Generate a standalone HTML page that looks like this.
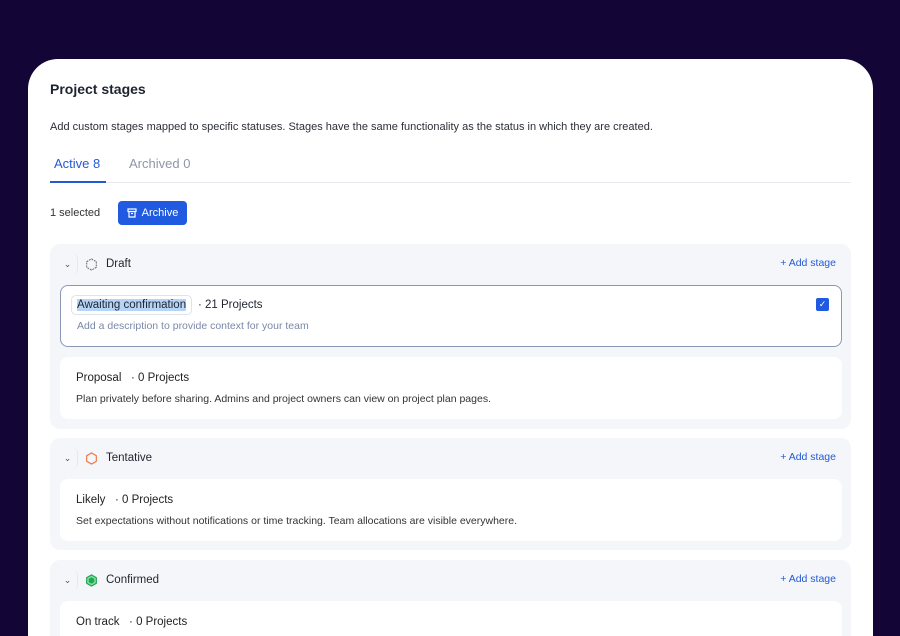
<!DOCTYPE html>
<html><head><style>
*{box-sizing:border-box;margin:0;padding:0}
html,body{width:900px;height:636px;overflow:hidden}
body{background:#130636;font-family:"Liberation Sans",sans-serif;position:relative;color:#1f2430}
.card{position:absolute;left:28px;top:59px;width:845px;height:577px;background:#fff;border-radius:30px 30px 0 0}
.abs{position:absolute}
.grp{position:absolute;left:50px;width:801px;background:#f5f6f9;border-radius:10px}
.hdr{position:absolute;left:8px;top:9px;height:22px;display:flex;align-items:center;font-size:11.5px}
.chev{width:20px;height:20px;border-radius:5px;display:flex;align-items:center;justify-content:center;color:#555;font-size:9px;border-right:1px solid #e6e8ee}
.add{position:absolute;right:8px;top:13px;font-size:10.5px;color:#2459d6;padding:0 7px}
.it{position:absolute;left:10px;width:782px;background:#fff;border-radius:8px;height:62px}
.t1{position:absolute;left:16px;top:15px;font-size:11.5px;color:#222}
.t2{position:absolute;left:16px;top:36px;font-size:10.5px;color:#333}
</style></head><body>
<div class="card"></div>
<div class="abs" style="left:50px;top:81px;font-size:14px;font-weight:bold;color:#1e2330">Project stages</div>
<div class="abs" style="left:50px;top:121px;font-size:11px;color:#2c2f38">Add custom stages mapped to specific statuses. Stages have the same functionality as the status in which they are created.</div>
<div class="abs" style="left:54px;top:156px;font-size:13px;color:#2459d6">Active 8</div>
<div class="abs" style="left:129px;top:156px;font-size:13px;color:#8f96a6">Archived 0</div>
<div class="abs" style="left:50px;top:182px;width:801px;height:1px;background:#e8eaef"></div>
<div class="abs" style="left:50px;top:181px;width:56px;height:2px;background:#2459d6"></div>
<div class="abs" style="left:50px;top:207px;font-size:11px;color:#333">1 selected</div>
<div class="abs" style="left:118px;top:201px;width:69px;height:24px;background:#1f5ae0;border-radius:4px;color:#fff;font-size:11px;display:flex;align-items:center;justify-content:center;gap:5px">
<svg width="10" height="10" viewBox="0 0 10 10" fill="none" stroke="#fff" stroke-width="1.2"><rect x="1" y="1" width="8" height="2.5"/><path d="M2 3.5v5.5h6v-5.5M4 5.5h2"/></svg>Archive</div>

<div class="grp" style="top:244px;height:185px">
<div class="hdr"><div class="chev">⌄</div><svg style="margin:0 8px 0 7px" width="13" height="13" viewBox="0 0 14 14" fill="none" stroke="#777" stroke-width="1.2" stroke-dasharray="2 1"><path d="M7 1l5.2 3v6L7 13 1.8 10V4z"/></svg>Draft</div>
<div class="add">+ Add stage</div>
<div class="it" style="top:41px;border:1px solid #8a97b5">
<div class="abs" style="left:10px;top:9px;padding:3px 5px;border:1px solid #dfe3ea;border-radius:5px;font-size:11.5px"><span style="background:#b6d4f5">Awaiting confirmation</span></div>
<div class="abs" style="left:137px;top:13px;font-size:11.5px">· 21 Projects</div>
<div class="abs" style="left:16px;top:34px;font-size:10.5px;color:#7a88a8">Add a description to provide context for your team</div>
<div class="abs" style="right:12px;top:12px;width:13px;height:13px;background:#1f5ae0;border-radius:2px;color:#fff;font-size:9px;text-align:center;line-height:13px">✓</div>
</div>
<div class="it" style="top:113px"><div class="t1">Proposal &nbsp;&nbsp;· 0 Projects</div><div class="t2">Plan privately before sharing. Admins and project owners can view on project plan pages.</div></div>
</div>

<div class="grp" style="top:438px;height:112px">
<div class="hdr"><div class="chev">⌄</div><svg style="margin:0 8px 0 7px" width="13" height="13" viewBox="0 0 14 14" fill="none" stroke="#f07a45" stroke-width="1.3"><path d="M7 1l5.2 3v6L7 13 1.8 10V4z"/></svg>Tentative</div>
<div class="add">+ Add stage</div>
<div class="it" style="top:41px"><div class="t1">Likely &nbsp;&nbsp;· 0 Projects</div><div class="t2">Set expectations without notifications or time tracking. Team allocations are visible everywhere.</div></div>
</div>

<div class="grp" style="top:560px;height:76px;border-radius:10px 10px 0 0;overflow:hidden">
<div class="hdr"><div class="chev">⌄</div><svg style="margin:0 8px 0 7px" width="13" height="13" viewBox="0 0 14 14"><path d="M7 1l5.2 3v6L7 13 1.8 10V4z" fill="#8fdca8" stroke="#1fa84f" stroke-width="1.3"/><path d="M7 3.5l3 1.7v3.6L7 10.5 4 8.8V5.2z" fill="#1fa84f"/></svg>Confirmed</div>
<div class="add">+ Add stage</div>
<div class="it" style="top:41px"><div class="t1">On track &nbsp;&nbsp;· 0 Projects</div></div>
</div>
</body></html>
